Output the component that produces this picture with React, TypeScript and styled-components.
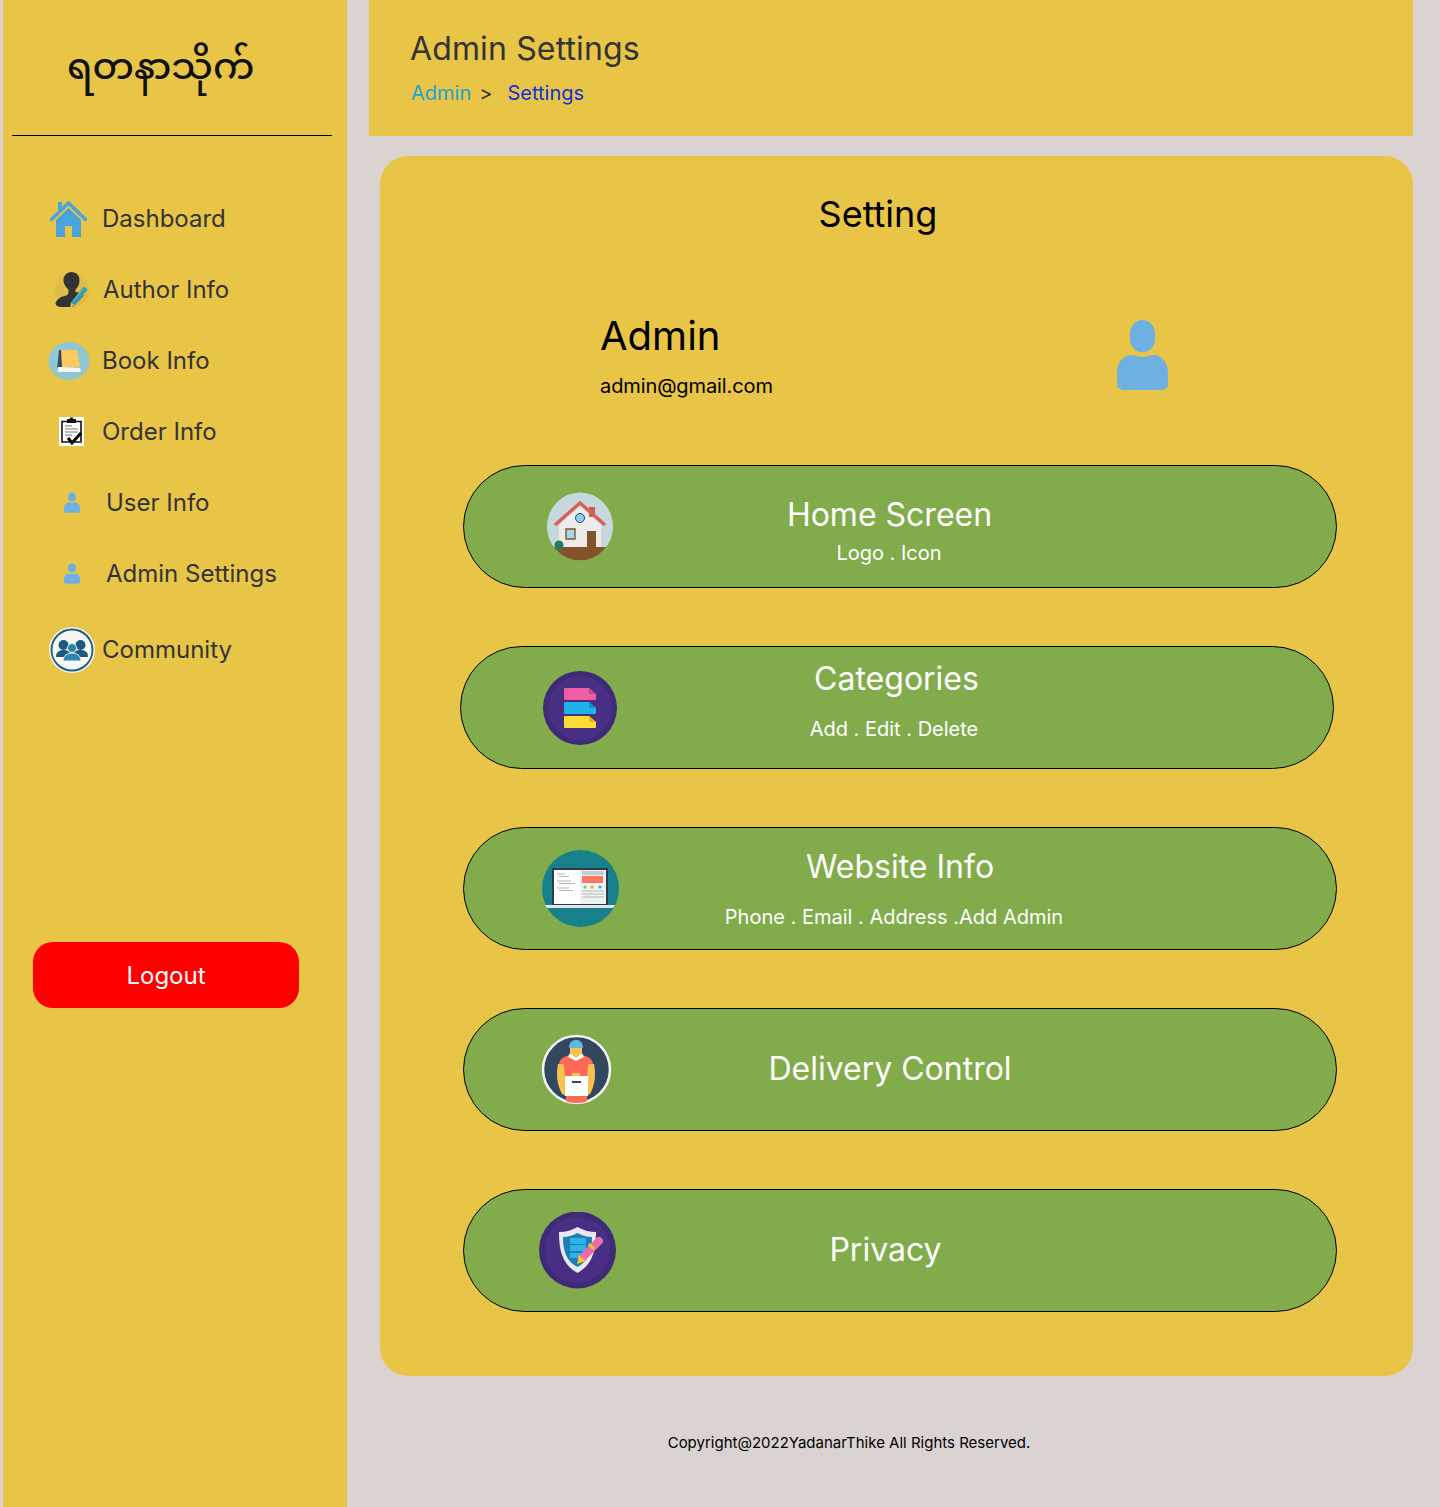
import React from "react";
import styled, { createGlobalStyle } from "styled-components";

const yellow = "#e8c547";
const green = "#82ab4c";

const Global = createGlobalStyle`
  html, body { margin: 0; padding: 0; background: #dbd2d2; }
  body { font-family: Inter, "Noto Sans", sans-serif; }
  * { box-sizing: border-box; }
`;

const Page = styled.div`
  display: grid;
  grid-template-columns: 344px 1044px;
  column-gap: 22px;
  margin-left: 3px;
  min-height: 1507px;
`;
const Sidebar = styled.aside`
  background: ${yellow};
  height: 1507px;
  display: flex;
  flex-direction: column;
`;
const LogoBar = styled.div`
  height: 136px;
  margin: 0 15px 0 9px;
  border-bottom: 1px solid #000;
  padding: 0 0 0 55px;
  display: flex;
  align-items: center;
`;
const Wordmark = styled.div`
  font-family: "Noto Sans Myanmar", "Noto Sans", sans-serif;
  font-size: 37px;
  font-weight: 500;
  color: #111;
  line-height: 1;
  margin-top: 6px;
`;
const Nav = styled.nav`
  display: flex;
  flex-direction: column;
  padding: 47px 0 0 45px;
`;
const NavRow = styled.a<{ $h?: number; $textX: number }>`
  height: ${(p) => p.$h ?? 71}px;
  display: grid;
  grid-template-columns: ${(p) => p.$textX}px 1fr;
  align-items: center;
  font-size: 24px;
  color: #333;
  line-height: 30px;
`;
const NavIcon = styled.svg<{ $ml: number }>`
  display: block;
  margin-left: ${(p) => p.$ml}px;
`;
const Logout = styled.button`
  width: 266px;
  height: 66px;
  margin: 252px 0 0 30px;
  border: 0;
  border-radius: 20px;
  background: #ff0000;
  color: #fff;
  font: 400 24px Inter, sans-serif;
`;
const Main = styled.main`
  display: flex;
  flex-direction: column;
`;
const Header = styled.header`
  height: 136px;
  background: ${yellow};
  padding: 29px 0 0 42px;
`;
const PageTitle = styled.h1`
  margin: 0 0 0 -1px;
  font-size: 32px;
  font-weight: 400;
  letter-spacing: 0.14px;
  line-height: 40px;
  color: #333;
`;
const Crumbs = styled.div`
  margin-top: 9px;
  display: flex;
  font-size: 20px;
  line-height: 30px;
  color: #333;
`;
const Crumb = styled.span<{ $color?: string; $mr?: number }>`
  color: ${(p) => p.$color ?? "#333"};
  margin-right: ${(p) => p.$mr ?? 0}px;
`;
const Card = styled.section`
  margin: 20px 0 0 11px;
  height: 1220px;
  background: ${yellow};
  border-radius: 28px;
  padding-top: 35px;
`;
const CardTitle = styled.h2`
  margin: 0;
  padding-right: 37px;
  text-align: center;
  font-size: 36px;
  font-weight: 400;
  line-height: 46px;
  color: #000;
`;
const Profile = styled.div`
  margin-top: 74px;
  padding-left: 220px;
  display: grid;
  grid-template-columns: 517px 52px;
  align-items: start;
`;
const ProfileName = styled.div`
  font-size: 40px;
  line-height: 50px;
  color: #000;
`;
const ProfileMail = styled.div`
  margin-top: 10px;
  font-size: 20px;
  line-height: 30px;
  letter-spacing: -0.1px;
  color: #000;
`;
const ProfileIcon = styled.svg`
  display: block;
  margin-top: 9px;
`;
const Rows = styled.div`
  margin-top: 64px;
  display: flex;
  flex-direction: column;
  gap: 58px;
`;
const Row = styled.div<{ $ml: number }>`
  width: 874px;
  height: 123px;
  margin-left: ${(p) => p.$ml}px;
  background: ${green};
  border: 1px solid #000;
  border-radius: 62px;
  display: grid;
  grid-template-columns: 234px 384px;
  align-items: center;
  color: #fff;
`;
const RowIcon = styled.svg<{ $ml: number }>`
  display: block;
  margin-left: ${(p) => p.$ml}px;
`;
const RowText = styled.div<{ $top: number; $gap: number }>`
  align-self: start;
  padding-top: ${(p) => p.$top}px;
  display: flex;
  flex-direction: column;
  align-items: center;
  gap: ${(p) => p.$gap}px;
  white-space: nowrap;
`;
const RowTitle = styled.div<{ $shift?: number }>`
  font-size: 32px;
  line-height: 38px;
  margin-left: ${(p) => (p.$shift ?? 0) * 2}px;
`;
const RowSub = styled.div<{ $shift?: number }>`
  font-size: 20px;
  line-height: 24px;
  margin-left: ${(p) => (p.$shift ?? 0) * 2}px;
`;
const Footer = styled.footer`
  margin-top: 57px;
  padding-right: 84px;
  text-align: center;
  font-size: 15px;
  line-height: 20px;
  color: #000;
`;

const PersonPath = "M25.500 0c7 0 12.500 5.500 12.500 13v5c0 7-5.500 12.500-12.500 12.500S13 25 13 18v-5C13 5.500 18.500 0 25.500 0ZM13 33c5 0 8 2 12.500 2S33 33 38 33c7.500 1 13 8 13 17v13l-5 3H5l-5-3V50c0-9 5.500-16 13-17Z";

const App: React.FC = () => (
  <>
    <Global />
    <Page>
      <Sidebar>
        <LogoBar>
          <Wordmark lang="my">ရတနာသိုက်</Wordmark>
        </LogoBar>
        <Nav>
          <NavRow $textX={54}>
            <NavIcon $ml={2} width="37" height="36" viewBox="0 0 37 36">
              <path d="M1.500 18.500 18.500 2l17 16.500" fill="none" stroke="#4ba3dc" strokeWidth="3.600" strokeLinecap="round" strokeLinejoin="round" />
              <path d="M8 1h4v8H8z" fill="#4ba3dc" />
              <path d="M18.500 7 31 19v17H22V25h-7v11H6V19Z" fill="#4ba3dc" />
            </NavIcon>
            <span>Dashboard</span>
          </NavRow>
          <NavRow $textX={55}>
            <NavIcon $ml={7} width="35" height="36" viewBox="0 0 35 36">
              <circle cx="17" cy="18" r="17" fill="#dfbc45" />
              <path d="M16.500 0c5 0 8 3.500 8 8.500 0 3.500-1.500 7-4 9v2.500c3 .6 6 1.500 8 3.500L18 35H6c-2 0-5-1-5.500-3 .5-4 4-7 9-8 3-.5 4-2 4-4v-2.500C11 15.500 8.500 12 8.500 8.500 8.500 3.500 12 0 16.500 0Z" fill="#333" />
              <path d="M17.500 32.500 30.500 16" stroke="#2e9fc4" strokeWidth="5" />
              <path d="M18 29 28 17" stroke="#dfbc45" strokeWidth="0.800" />
              <path d="M15 35.500l1-5 4 3Z" fill="#dfbc45" />
            </NavIcon>
            <span>Author Info</span>
          </NavRow>
          <NavRow $textX={54}>
            <NavIcon $ml={0} width="42" height="40" viewBox="0 0 42 40">
              <ellipse cx="21" cy="20" rx="20.500" ry="19" fill="#8fc8d3" />
              <path d="M11 9h4v20h-6Z" fill="#33495e" />
              <path d="M13 9h16l3 17H14Z" fill="#fdc85c" />
              <path d="M10 26h4l18 1 1 3-1 1H11c-2 0-2-3-1-5Z" fill="#f5f5f0" />
            </NavIcon>
            <span>Book Info</span>
          </NavRow>
          <NavRow $textX={54}>
            <NavIcon $ml={11} width="25" height="29" viewBox="0 0 25 29">
              <path d="M0 0h25v29H0z" fill="#fff" />
              <path d="M3 4.500h19v20.500H3z" fill="#fff" stroke="#111" strokeWidth="1.600" />
              <path d="M8 2h9v4H8z" fill="#111" />
              <path d="M11 .5h3v3h-3z" fill="#111" />
              <path d="M6 9h7M6 12h13M6 15h13M6 18h7" stroke="#777" strokeWidth="1.200" />
              <path d="M9 21l4 5 9-10" fill="none" stroke="#000" strokeWidth="3" />
            </NavIcon>
            <span>Order Info</span>
          </NavRow>
          <NavRow $textX={58}>
            <NavIcon $ml={16} width="16" height="21" viewBox="0 0 51 66">
              <path d={PersonPath} fill="#6fb0e2" />
            </NavIcon>
            <span>User Info</span>
          </NavRow>
          <NavRow $textX={58}>
            <NavIcon $ml={16} width="16" height="21" viewBox="0 0 51 66">
              <path d={PersonPath} fill="#6fb0e2" />
            </NavIcon>
            <span>Admin Settings</span>
          </NavRow>
          <NavRow $textX={54} $h={81}>
            <NavIcon $ml={1} width="46" height="46" viewBox="0 0 46 46">
              <circle cx="23" cy="23" r="23" fill="#f4f4f4" />
              <circle cx="23" cy="23" r="20.500" fill="#f6f6f6" stroke="#1c5a80" strokeWidth="1.800" />
              <circle cx="14.500" cy="18" r="5" fill="#1c5a80" />
              <circle cx="31.500" cy="18" r="5" fill="#1c5a80" />
              <path d="M7 30c0-5 3-7 7.500-7s8 2 8 7Z" fill="#1c5a80" />
              <path d="M23.500 30c0-5 3-7 8-7s7.500 2 7.500 7Z" fill="#1c5a80" />
              <circle cx="23" cy="21" r="4.500" fill="#2b86ad" stroke="#f6f6f6" />
              <path d="M14 34c0-5 4-8 9-8s9 3 9 8Z" fill="#2b86ad" stroke="#f6f6f6" />
            </NavIcon>
            <span>Community</span>
          </NavRow>
        </Nav>
        <Logout>Logout</Logout>
      </Sidebar>
      <Main>
        <Header>
          <PageTitle>Admin Settings</PageTitle>
          <Crumbs>
            <Crumb $color="#1fa3cf" $mr={8}>Admin</Crumb>
            <Crumb $mr={15}>&gt;</Crumb>
            <Crumb $color="#1030dc">Settings</Crumb>
          </Crumbs>
        </Header>
        <Card>
          <CardTitle>Setting</CardTitle>
          <Profile>
            <div>
              <ProfileName>Admin</ProfileName>
              <ProfileMail>admin@gmail.com</ProfileMail>
            </div>
            <ProfileIcon width="51" height="70" viewBox="0 0 51 66" preserveAspectRatio="none">
              <path d={PersonPath} fill="#6fb0e2" />
            </ProfileIcon>
          </Profile>
          <Rows>
            <Row $ml={83}>
              <RowIcon $ml={83} width="66" height="69" viewBox="0 0 66 69">
                <defs>
                  <clipPath id="homeClip"><ellipse cx="33" cy="34.500" rx="33" ry="34" /></clipPath>
                </defs>
                <ellipse cx="33" cy="34.500" rx="33" ry="34" fill="#c7d8dc" />
                <g clipPath="url(#homeClip)">
                  <path d="M0 55h66v14H0z" fill="#83542a" />
                  <path d="M12 33 33 13l21 20v22H12Z" fill="#ececec" />
                  <path d="M42 15h6v10h-6z" fill="#cf5b52" />
                  <path d="M8 33 33 11l25 22" fill="none" stroke="#d9605a" strokeWidth="3.500" />
                  <circle cx="33" cy="26" r="4.500" fill="#8fd0f2" stroke="#23485f" strokeWidth="1" />
                  <path d="M19 37h9v10h-9z" fill="#a9d8ee" stroke="#83542a" strokeWidth="1.400" />
                  <path d="M40 39h9v16h-9z" fill="#83542a" />
                  <circle cx="12" cy="53" r="4.500" fill="#1f7d5e" />
                </g>
              </RowIcon>
              <RowText $top={30} $gap={7}>
                <RowTitle $shift={-0.5}>Home Screen</RowTitle>
                <RowSub $shift={-1}>Logo . Icon</RowSub>
              </RowText>
            </Row>
            <Row $ml={80}>
              <RowIcon $ml={82} width="74" height="74" viewBox="0 0 74 74">
                <circle cx="37" cy="37" r="37" fill="#3f2a78" />
                <circle cx="37" cy="37" r="32" fill="#482f83" />
                <path d="M22 17h24l7 6v5a1 1 0 0 1-1 1H22a1 1 0 0 1-1-1V18a1 1 0 0 1 1-1Z" fill="#ef5da2" />
                <path d="M46 17l7 6h-7Z" fill="#c2448a" />
                <path d="M22 31h24l7 6v5a1 1 0 0 1-1 1H22a1 1 0 0 1-1-1V32a1 1 0 0 1 1-1Z" fill="#1fb2ea" />
                <path d="M46 31l7 6h-7Z" fill="#1590c4" />
                <path d="M22 45h24l7 6v5a1 1 0 0 1-1 1H22a1 1 0 0 1-1-1V46a1 1 0 0 1 1-1Z" fill="#fedb35" />
                <path d="M46 45l7 6h-7Z" fill="#e2b422" />
              </RowIcon>
              <RowText $top={13} $gap={19}>
                <RowTitle $shift={9.500}>Categories</RowTitle>
                <RowSub $shift={7}>Add . Edit . Delete</RowSub>
              </RowText>
            </Row>
            <Row $ml={83}>
              <RowIcon $ml={78} width="78" height="78" viewBox="0 0 78 78">
                <circle cx="38.500" cy="38.500" r="38.500" fill="#17808a" />
                <path d="M10 18h56v37H10z" fill="#2f3a48" />
                <path d="M12 20h26v34H12z" fill="#fff" />
                <path d="M38 20h26v34H38z" fill="#eef2f5" />
                <path d="M40 21h22v4H40z" fill="#c6ced3" />
                <path d="M40 26h21v7H40z" fill="#fb7560" />
                <path d="M15 24h8M17 26.500h10M15 31h14M17 33.500h16M15 38h12M17 40.500h14" stroke="#9a9ea3" strokeWidth="0.800" />
                <circle cx="43" cy="37" r="1.600" fill="#7cc36a" />
                <circle cx="50" cy="37" r="1.600" fill="#f7a51e" />
                <circle cx="58" cy="37" r="1.600" fill="#22b5e0" />
                <path d="M40 41h22M40 44h22M40 47h22" stroke="#c8cdd1" strokeWidth="1.400" />
                <path d="M3 55h70l-2 3H5Z" fill="#dfe4e6" />
              </RowIcon>
              <RowText $top={20} $gap={19}>
                <RowTitle $shift={10}>Website Info</RowTitle>
                <RowSub $shift={4}>Phone . Email . Address .Add Admin</RowSub>
              </RowText>
            </Row>
            <Row $ml={83}>
              <RowIcon $ml={77} width="71" height="71" viewBox="0 0 71 71">
                <defs>
                  <clipPath id="riderClip"><circle cx="35.500" cy="35.500" r="33.500" /></clipPath>
                </defs>
                <circle cx="35.500" cy="35.500" r="33.500" fill="#33485f" stroke="#f4f4f4" strokeWidth="2.500" />
                <g clipPath="url(#riderClip)">
                  <path d="M18 30c1-6 6-8 11-9h12c5 1 10 3 11 9v13H18Z" fill="#fa6a55" />
                  <path d="M17 30h6l2 32-4-2c-5-9-6-20-4-30Z" fill="#f7c24f" />
                  <path d="M53 30h-6l-2 32 4-2c5-9 6-20 4-30Z" fill="#f7c24f" />
                  <path d="M29 12h12v7l-6 6-6-6Z" fill="#f7c24f" />
                  <path d="M29 19l6 5 6-5 2 4-8 4-8-4Z" fill="#fff" />
                  <path d="M28 14c0-11 14-11 14 0Z" fill="#62b5dc" />
                  <path d="M24 42h23v20H24z" fill="#fff" />
                  <path d="M31 47h9v2h-9z" fill="#33485f" />
                  <path d="M31 39h8v3h-8z" fill="#f7c24f" />
                  <path d="M25 62h21v7H25z" fill="#fa6a55" />
                </g>
              </RowIcon>
              <RowText $top={41} $gap={0}>
                <RowTitle $shift={0}>Delivery Control</RowTitle>
              </RowText>
            </Row>
            <Row $ml={83}>
              <RowIcon $ml={75} width="78" height="78" viewBox="0 0 78 78">
                <circle cx="38.500" cy="38" r="38.500" fill="#3f2a78" />
                <circle cx="38.500" cy="38" r="33" fill="#482f83" />
                <path d="M38.500 15c5 3 12 5 18.500 5 0 18-3 32-18.500 41C23 52 20 38 20 20c7 0 13.500-2 18.500-5Z" fill="#e8e8ee" />
                <path d="M38.500 21c4 2 9 4 14.500 4 0 14-3 24-14.500 30C27 49 24 39 24 25c5.500 0 10.500-2 14.500-4Z" fill="#1d7fb8" />
                <path d="M31 26h16v6H31zM31 33h16v6H31zM31 41h16v5H31z" fill="#2eb3e6" />
                <path d="M43 46 60 29" stroke="#e56ea8" strokeWidth="8" strokeLinecap="round" />
                <path d="M51 38l5 5" stroke="#fbc02d" strokeWidth="3" transform="translate(-1 -6)" />
                <path d="M40 43l-2 9 9-3Z" fill="#fbc02d" />
              </RowIcon>
              <RowText $top={41} $gap={0}>
                <RowTitle $shift={-4.500}>Privacy</RowTitle>
              </RowText>
            </Row>
          </Rows>
        </Card>
        <Footer>Copyright@2022YadanarThike All Rights Reserved.</Footer>
      </Main>
    </Page>
  </>
);

export default App;
